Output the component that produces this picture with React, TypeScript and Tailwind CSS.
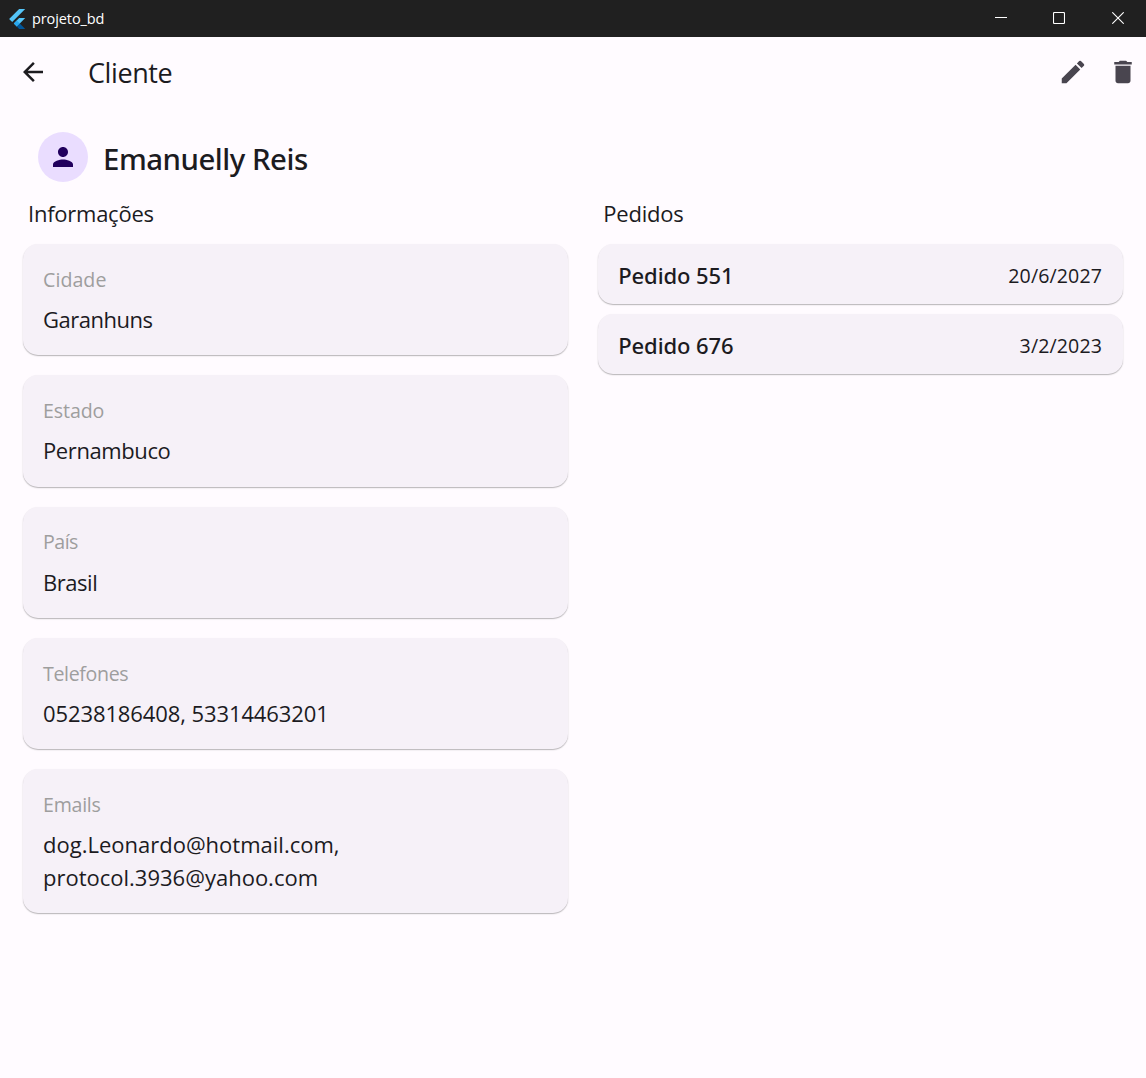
import React from "react";
import { MdArrowBack, MdDelete, MdEdit, MdPerson } from "react-icons/md";

const infos = [
  { label: "Cidade", lines: ["Garanhuns"], labelTracking: "tracking-[0.05px]", tracking: "tracking-[-0.48px]" },
  { label: "Estado", lines: ["Pernambuco"], labelTracking: "tracking-[-0.1px]", tracking: "tracking-[-0.4px]" },
  { label: "País", lines: ["Brasil"], labelTracking: "tracking-[-0.5px]", tracking: "tracking-[-0.45px]" },
  { label: "Telefones", lines: ["05238186408, 53314463201"], labelTracking: "tracking-[-0.35px]", tracking: "tracking-[-0.1px]" },
  {
    label: "Emails",
    lines: ["dog.Leonardo@hotmail.com,", "protocol.3936@yahoo.com"],
    labelTracking: "tracking-[-0.25px]",
    tracking: "tracking-[0px]",
  },
];

const pedidos = [
  { name: "Pedido 551", date: "20/6/2027" },
  { name: "Pedido 676", date: "3/2/2023" },
];

const cardClass =
  "rounded-[15px] bg-[#f6f1f8] shadow-[0_1px_1px_rgba(0,0,0,0.2),0_1px_2px_rgba(0,0,0,0.1)]";

function FlutterLogo() {
  return (
    <svg width="17" height="20" viewBox="0 0 17 20" className="shrink-0">
      <path d="M10.1 0H16.2L3.2 13L0.1 10Z" fill="#54c5f8" />
      <path d="M10.1 9H16.2L10.8 14.4L7.8 17.4L4.8 14.5Z" fill="#54c5f8" />
      <path d="M7.8 11.5L10.8 14.5L7.8 17.5L4.8 14.5Z" fill="#29a8ee" />
      <path d="M7.8 17.5L10.8 14.5L16.2 20H10.1Z" fill="#01579b" />
    </svg>
  );
}

function TitleBar() {
  return (
    <header className="flex h-[37px] items-center bg-[#202020] pl-[9px] text-white">
      <FlutterLogo />
      <span className="ml-1.5 text-[14.5px] leading-5 tracking-[-0.1px]">projeto_bd</span>
      <div className="ml-auto flex h-full pb-px">
        <span className="flex w-[58px] items-center justify-center">
          <svg width="12" height="12" viewBox="0 0 12 12">
            <path d="M0 5.5H12" stroke="currentColor" />
          </svg>
        </span>
        <span className="flex w-[58px] items-center justify-center">
          <svg width="12" height="12" viewBox="0 0 12 12" fill="none">
            <rect x="0.5" y="0.5" width="11" height="11" rx="1" stroke="currentColor" strokeWidth="1.1" />
          </svg>
        </span>
        <span className="flex w-[58px] items-center justify-center pl-0.5">
          <svg width="12" height="12" viewBox="0 0 12 12">
            <path d="M0.3 0.3L11.7 11.7M11.7 0.3L0.3 11.7" stroke="currentColor" strokeWidth="1.1" />
          </svg>
        </span>
      </div>
    </header>
  );
}

export default function App() {
  return (
    <div className="h-[1078px] w-[1146px] overflow-hidden bg-[#fffbff] font-['Open_Sans',sans-serif] text-[#1c1b1f]">
      <TitleBar />
      <div className="flex h-[70px] items-center pl-[18.4px] pr-2">
        <MdArrowBack size={30} />
        <h1 className="ml-[39.6px] mt-0.5 text-[27px] leading-[38px] tracking-[-0.4px]">Cliente</h1>
        <MdEdit size={30} className="ml-auto text-[#49454f]" />
        <MdDelete size={30} className="ml-5 text-[#49454f]" />
      </div>

      <div className="mt-[25px] flex items-center pl-[38px]">
        <span className="flex size-[50px] items-center justify-center rounded-full bg-[#eaddff] text-[#21005d]">
          <MdPerson size={30} />
        </span>
        <h2 className="ml-[15px] mt-[4px] font-['Noto_Sans',sans-serif] text-[29.4px] font-medium leading-10 tracking-[-0.48px]">
          Emanuelly Reis
        </h2>
      </div>

      <div className="flex gap-[29.5px] pl-[22.5px] pr-[22.75px] pt-[15px]">
        <section className="w-[545.75px]">
          <h3 className="pl-[5.5px] text-[22px] leading-[33px] tracking-[-0.25px]">Informações</h3>
          <div className="mt-[14.25px] flex flex-col gap-5">
            {infos.map((i) => (
              <div key={i.label} className={`${cardClass} px-[20.5px] pb-[19.25px] pt-[21.75px]`}>
                <p className={`text-[19.6px] leading-7 text-[#9e9e9e] ${i.labelTracking}`}>{i.label}</p>
                <div className="mt-[9.2px]">
                  {i.lines.map((l) => (
                    <p key={l} className={`text-[22px] leading-[33px] ${i.tracking}`}>
                      {l}
                    </p>
                  ))}
                </div>
              </div>
            ))}
          </div>
        </section>
        <section className="flex-1">
          <h3 className="pl-[5.5px] text-[22px] leading-[33px] tracking-[-0.2px]">Pedidos</h3>
          <div className="mt-[14.25px] flex flex-col gap-2.5">
            {pedidos.map((p) => (
              <div key={p.name} className={`${cardClass} flex h-[60px] items-center justify-between pl-[20.5px] pr-[21.25px] pt-[2.5px]`}>
                <span className="font-['Noto_Sans',sans-serif] text-[22px] font-medium leading-[33px] tracking-[-0.1px]">
                  {p.name}
                </span>
                <span className="text-[19.6px] leading-7 tracking-[0.1px]">{p.date}</span>
              </div>
            ))}
          </div>
        </section>
      </div>
    </div>
  );
}
